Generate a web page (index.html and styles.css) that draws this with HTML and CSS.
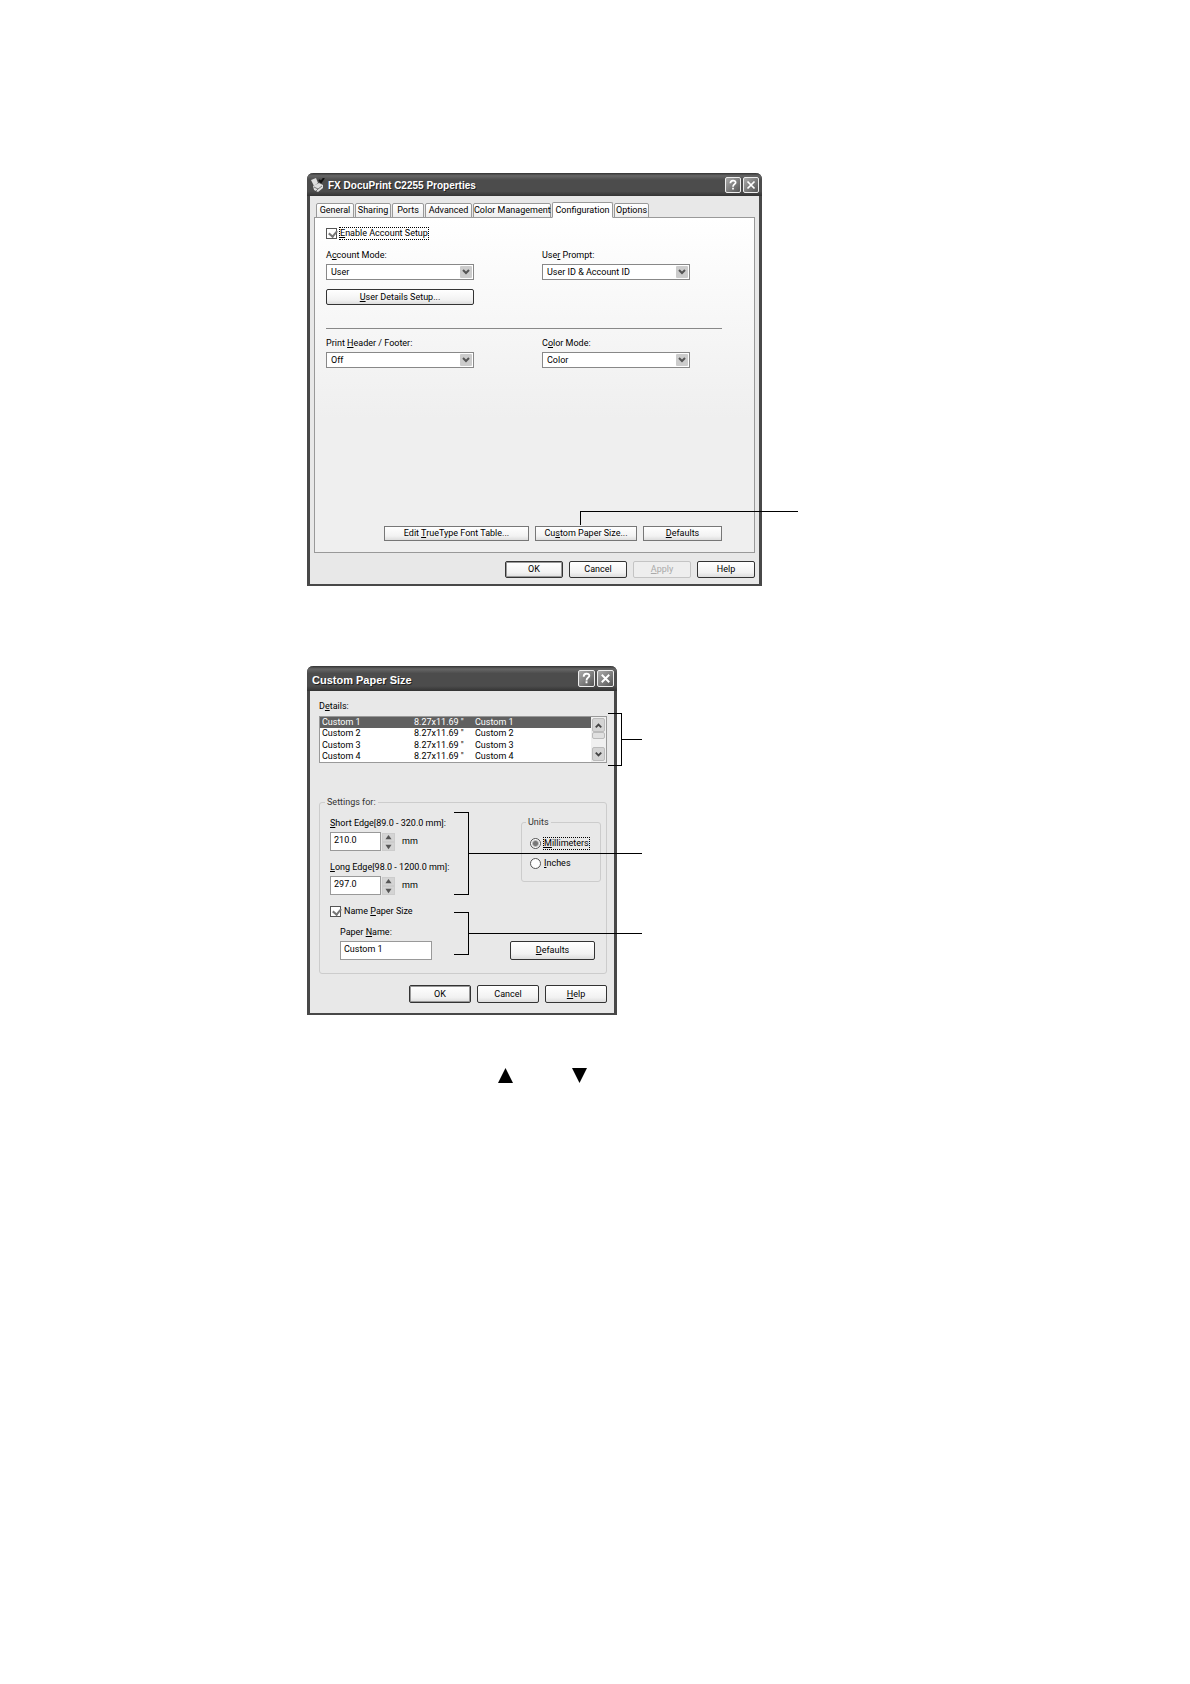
FILE: index.html
```html
<!DOCTYPE html>
<html lang="en">
<head>
<meta charset="utf-8">
<title>Custom Paper Size</title>
<link rel="stylesheet" href="styles.css">
</head>
<body>
<main class="page">
  <figure class="figure">
    <section class="dialog properties" aria-label="FX DocuPrint C2255 Properties">
      <header class="titlebar">
        <svg class="printer" width="14" height="14" viewBox="0 0 14 14" aria-hidden="true">
          <path d="M0 2l5-2 2 5-4 3z" fill="#ddd"/>
          <path d="M2 8l6-3 4 2v3l-5 4-4-2z" fill="#ddd"/>
          <path d="M3 9l4 2 4-3M5 13l2-2" stroke="#777" fill="none"/>
          <path d="M8 2l2 2 3-4" stroke="#111" stroke-width="2" fill="none"/>
        </svg>
        <h1>FX DocuPrint C2255 Properties</h1>
        <button class="cap" aria-label="Help"><svg viewBox="0 0 16 16"><path d="M5 6c0-4 6-4 6-1 0 2-3 2-3 5M8 11v2"/></svg></button>
        <button class="cap" aria-label="Close"><svg viewBox="0 0 16 16"><path d="M4 4l8 8M12 4l-8 8"/></svg></button>
      </header>
      <div class="sheet">
        <nav class="tabs" role="tablist">
          <button role="tab" class="tab t-general">General</button>
          <button role="tab" class="tab t-sharing">Sharing</button>
          <button role="tab" class="tab t-ports">Ports</button>
          <button role="tab" class="tab t-advanced">Advanced</button>
          <button role="tab" class="tab t-color">Color Management</button>
          <button role="tab" class="tab t-config active" aria-selected="true">Configuration</button>
          <button role="tab" class="tab t-options">Options</button>
        </nav>
        <div class="panel">
          <label class="check"><input type="checkbox" checked><span class="focus"><u>E</u>nable Account Setup</span></label>
          <div class="columns">
            <div class="field">
              <label for="mode">A<u>c</u>count Mode:</label>
              <select id="mode"><option>User</option></select>
            </div>
            <div class="field">
              <label for="prompt">Use<u>r</u> Prompt:</label>
              <select id="prompt"><option>User ID &amp; Account ID</option></select>
            </div>
          </div>
          <button class="btn details"><u>U</u>ser Details Setup...</button>
          <hr>
          <div class="columns">
            <div class="field">
              <label for="header">Print <u>H</u>eader / Footer:</label>
              <select id="header"><option>Off</option></select>
            </div>
            <div class="field">
              <label for="color">C<u>o</u>lor Mode:</label>
              <select id="color"><option>Color</option></select>
            </div>
          </div>
          <div class="tools">
            <button class="btn flat w-font">Edit <u>T</u>rueType Font Table...</button>
            <button class="btn flat w-custom">Cu<u>s</u>tom Paper Size...</button>
            <button class="btn flat w-def"><u>D</u>efaults</button>
          </div>
        </div>
        <footer class="actions">
          <button class="btn default">OK</button>
          <button class="btn">Cancel</button>
          <button class="btn" disabled><u>A</u>pply</button>
          <button class="btn">Help</button>
        </footer>
      </div>
    </section>
    <svg class="callout" width="492" height="413" aria-hidden="true"><path d="M273 352V338H491"/></svg>
  </figure>

  <figure class="figure">
    <section class="dialog paper" aria-label="Custom Paper Size">
      <header class="titlebar">
        <h1>Custom Paper Size</h1>
        <button class="cap" aria-label="Help"><svg viewBox="0 0 16 16"><path d="M5 6c0-4 6-4 6-1 0 2-3 2-3 5M8 11v2"/></svg></button>
        <button class="cap" aria-label="Close"><svg viewBox="0 0 16 16"><path d="M4 4l8 8M12 4l-8 8"/></svg></button>
      </header>
      <div class="body">
        <h2 id="details">D<u>e</u>tails:</h2>
        <div class="list">
          <table aria-labelledby="details">
            <tr class="selected"><td class="c-name">Custom 1</td><td class="c-size">8.27x11.69 "</td><td>Custom 1</td></tr>
            <tr><td>Custom 2</td><td>8.27x11.69 "</td><td>Custom 2</td></tr>
            <tr><td>Custom 3</td><td>8.27x11.69 "</td><td>Custom 3</td></tr>
            <tr><td>Custom 4</td><td>8.27x11.69 "</td><td>Custom 4</td></tr>
          </table>
          <div class="scroll">
            <button aria-label="Scroll up"><svg viewBox="0 0 12 12"><path d="M3 8l3-3 3 3"/></svg></button>
            <span class="thumb"></span>
            <button aria-label="Scroll down"><svg viewBox="0 0 12 12"><path d="M3 4l3 3 3-3"/></svg></button>
          </div>
        </div>
        <fieldset class="settings">
          <legend>Settings for:</legend>
          <div class="split">
            <div class="edges">
              <label for="short"><u>S</u>hort Edge[89.0 - 320.0 mm]:</label>
              <div class="measure">
                <input id="short" type="text" value="210.0">
                <span class="spin"><button aria-label="Increase"><svg viewBox="0 0 11 8"><path d="M2 6l3.500-5 3.500 5z"/></svg></button><button aria-label="Decrease"><svg viewBox="0 0 11 8"><path d="M2 2l3.500 5 3.500-5z"/></svg></button></span>
                <span>mm</span>
              </div>
              <label for="long"><u>L</u>ong Edge[98.0 - 1200.0 mm]:</label>
              <div class="measure">
                <input id="long" type="text" value="297.0">
                <span class="spin"><button aria-label="Increase"><svg viewBox="0 0 11 8"><path d="M2 6l3.500-5 3.500 5z"/></svg></button><button aria-label="Decrease"><svg viewBox="0 0 11 8"><path d="M2 2l3.500 5 3.500-5z"/></svg></button></span>
                <span>mm</span>
              </div>
              <label class="check"><input type="checkbox" checked><span>Name <u>P</u>aper Size</span></label>
              <div class="name">
                <label for="name">Paper <u>N</u>ame:</label>
                <input id="name" type="text" value="Custom 1">
              </div>
            </div>
            <div class="side">
              <fieldset class="units">
                <legend>Units</legend>
                <label class="check"><input type="radio" name="unit" checked><span class="focus"><u>M</u>illimeters</span></label>
                <label class="check"><input type="radio" name="unit"><span><u>I</u>nches</span></label>
              </fieldset>
              <button class="btn"><u>D</u>efaults</button>
            </div>
          </div>
        </fieldset>
        <footer class="actions">
          <button class="btn default">OK</button>
          <button class="btn">Cancel</button>
          <button class="btn"><u>H</u>elp</button>
        </footer>
      </div>
    </section>
    <svg class="callout" width="336" height="349" aria-hidden="true"><path d="M301 47H314V99H301M314 73H335M147 146H161V228H147M161 187H335M147 246H161V288H147M161 267H335"/></svg>
  </figure>

  <p class="keys">
    <svg width="15" height="15" viewBox="0 0 15 15" role="img" aria-label="Up"><path d="M7.500 0L15 15H0z"/></svg>
    <svg width="15" height="15" viewBox="0 0 15 15" role="img" aria-label="Down"><path d="M0 0H15L7.500 15z"/></svg>
  </p>
</main>
</body>
</html>
```
FILE: styles.css
```css
* { box-sizing: border-box; }

body {
  margin: 0;
  background: #fff;
  color: #000;
  font: 9px/13px Roboto, "Liberation Sans", Arial, sans-serif;
}

button, input, select { font: inherit; color: inherit; margin: 0; padding: 0; }
h1, h2, p, figure { margin: 0; font-size: inherit; font-weight: inherit; }
u { text-underline-offset: 1px; }

.page {
  display: flex;
  flex-direction: column;
  align-items: flex-start;
  padding: 173px 0 64px 25.8%;
}

.figure { position: relative; }
.figure + .figure { margin-top: 80px; }

.callout {
  position: absolute;
  top: 0;
  left: 0;
  pointer-events: none;
  fill: none;
  stroke: #000;
  shape-rendering: crispEdges;
}

/* Windows */
.dialog {
  border: solid #484848;
  border-width: 0 3px 2px;
  border-radius: 6px 6px 0 0;
  background: #e8e8e8;
}
.properties { width: 455px; }
.paper { width: 310px; }

.titlebar {
  display: flex;
  align-items: center;
  gap: 2px;
  height: 23px;
  margin: 0 -3px;
  padding: 0 3px 0 4px;
  border-radius: 6px 6px 0 0;
  background: linear-gradient(#333, #666 12%, #4c4c4c 30%, #4c4c4c 80%, #333);
  color: #fff;
}
.titlebar h1 {
  flex: 1;
  padding-top: 2px;
  font: bold 10px/14px "Liberation Sans", Arial, sans-serif;
  text-shadow: 1px 1px #222;
}
.printer { margin-right: 1px; }
.paper .titlebar { height: 25px; padding-left: 5px; }
.paper .titlebar h1 { font-size: 11px; }

.cap {
  width: 16px;
  height: 16px;
  border: 1px solid #eee;
  border-radius: 2px;
  background: linear-gradient(135deg, #aaa, #555);
}
.cap svg { display: block; fill: none; stroke: #fff; stroke-width: 2; }
.paper .cap { width: 17px; height: 17px; }

/* Buttons */
.btn {
  height: 16px;
  border: 1px solid #333;
  border-radius: 2px;
  background: linear-gradient(#fff, #f2f2f2 70%, #ddd);
  line-height: 13px;
  text-align: center;
  white-space: nowrap;
}
.btn.flat { height: 15px; border-color: #777; border-radius: 0; }
.btn.default { box-shadow: inset 0 0 0 1px #999; }
.btn:disabled { border-color: #c4c4c4; background: #eee; color: #aaa; }

.actions { display: flex; justify-content: flex-end; gap: 6px; }
.actions .btn { width: 58px; height: 17px; }

/* Properties sheet */
.sheet { padding: 6px 4px 6px; }
.tabs { display: flex; align-items: flex-end; gap: 1px; height: 16px; padding-left: 2px; }
.tab {
  height: 15px;
  border: 1px solid #999;
  border-radius: 2px 2px 0 0;
  background: linear-gradient(#fff, #eee);
  text-align: center;
  white-space: nowrap;
}
.tab.active { position: relative; z-index: 1; height: 16px; border-bottom-color: #fff; background: #fff; }
.t-general { width: 38px; }
.t-sharing { width: 36px; }
.t-ports { width: 32px; }
.t-advanced { width: 47px; }
.t-color { width: 78px; }
.t-config { width: 61px; }
.t-options { width: 35px; }

.panel {
  display: flex;
  flex-direction: column;
  min-height: 336px;
  margin-top: -1px;
  padding: 9px 32px 11px 11px;
  border: 1px solid #999;
  background: linear-gradient(#fff, #efefef 60%);
}
.panel + .actions { padding-top: 8px; }
.columns { display: flex; gap: 68px; }
.check + .columns { margin-top: 9px; }
.field { display: flex; flex-direction: column; gap: 2px; width: 148px; }
select {
  height: 16px;
  padding: 0 4px;
  border: 1px solid #888;
  border-radius: 0;
  appearance: none;
  background: #fff url("data:image/svg+xml,%3Csvg xmlns='http://www.w3.org/2000/svg' width='12' height='12'%3E%3Crect width='12' height='12' rx='1' fill='%23ccc'/%3E%3Cpath d='M3 4l3 3 3-3' fill='none' stroke='%23555' stroke-width='2'/%3E%3C/svg%3E") right 1px center no-repeat;
}
.details { width: 148px; margin-top: 9px; }
hr { width: 100%; height: 1px; margin: 23px 0 8px; border: 0; background: #888; }
.tools { display: flex; justify-content: flex-end; gap: 6px; margin-top: auto; }
.w-font { width: 145px; }
.w-custom { width: 102px; }
.w-def { width: 79px; }

/* Tick boxes and radios */
.check { display: flex; align-items: center; gap: 2px; height: 13px; }
.check input {
  flex: none;
  width: 11px;
  height: 11px;
  border: 1px solid #555;
  appearance: none;
  background: #fff;
}
.check input[type="checkbox"]:checked::before {
  content: "";
  display: block;
  width: 4px;
  height: 6px;
  margin: 0 0 0 3px;
  border: solid #777;
  border-width: 0 2px 2px 0;
  transform: rotate(40deg);
}
.check input[type="radio"] { border-radius: 50%; }
.check input[type="radio"]:checked { background: radial-gradient(circle, #777 0 2px, #fff 4px); }
.check span { padding: 0 1px; }
.focus { outline: 1px dotted #000; outline-offset: -1px; }

/* Custom paper size */
.body { padding: 9px 7px 10px 9px; }
.list {
  display: flex;
  height: 47px;
  margin-top: 3px;
  border: 1px solid #999;
  background: #fff;
}
table { flex: 1; border-collapse: collapse; }
td { height: 11px; padding: 0 0 0 2px; line-height: 11px; white-space: nowrap; }
.c-name { width: 92px; }
.c-size { width: 61px; }
.selected { background: #606060; color: #fff; }
.scroll { display: flex; flex-direction: column; width: 15px; padding: 1px; background: #f0f0f0; }
.scroll button {
  height: 14px;
  border: 1px solid #bbb;
  border-radius: 2px;
  background: #d4d4d4;
}
.scroll svg { display: block; fill: none; stroke: #444; stroke-width: 2; }
.thumb { height: 7px; border: 1px solid #bbb; border-radius: 2px; background: #e0e0e0; }
.scroll .thumb + button { margin-top: auto; }

fieldset {
  min-width: 0;
  margin: 0;
  border: 1px solid #ccc;
  border-radius: 3px;
}
legend { padding: 0 2px; color: #333; }
.settings { margin-top: 33px; padding: 0 5px 13px 10px; }
.settings > legend { margin-left: -5px; }
.split { display: flex; justify-content: space-between; }
.edges { display: flex; flex-direction: column; padding-top: 8px; }
input[type="text"] {
  display: block;
  height: 19px;
  padding: 0 3px 3px;
  border: 1px solid #999;
  background: #fff;
}
.measure { display: flex; align-items: center; gap: 1px; margin: 2px 0 10px; }
.measure input { width: 51px; }
.spin { display: flex; flex-direction: column; width: 13px; margin-right: 6px; }
.spin button { height: 9px; border: 1px solid #ccc; background: #d4d4d4; }
.spin svg { display: block; height: 7px; width: 11px; fill: #555; }
.name { padding: 8px 0 0 10px; }
.name label { display: block; }
.name input { width: 92px; margin-top: 2px; }
.side { display: flex; flex-direction: column; width: 91px; padding-top: 7px; }
.side .btn { width: 85px; height: 19px; margin-top: auto; }
.units { width: 80px; align-self: flex-end; padding: 8px 0 11px 8px; }
.units legend { margin-left: -4px; }
.units .check + .check { margin-top: 7px; }
.body .actions { padding-top: 11px; }
.body .actions .btn { width: 62px; height: 18px; }

.keys { display: flex; gap: 59px; margin: 53px 0 0 191px; }
```
